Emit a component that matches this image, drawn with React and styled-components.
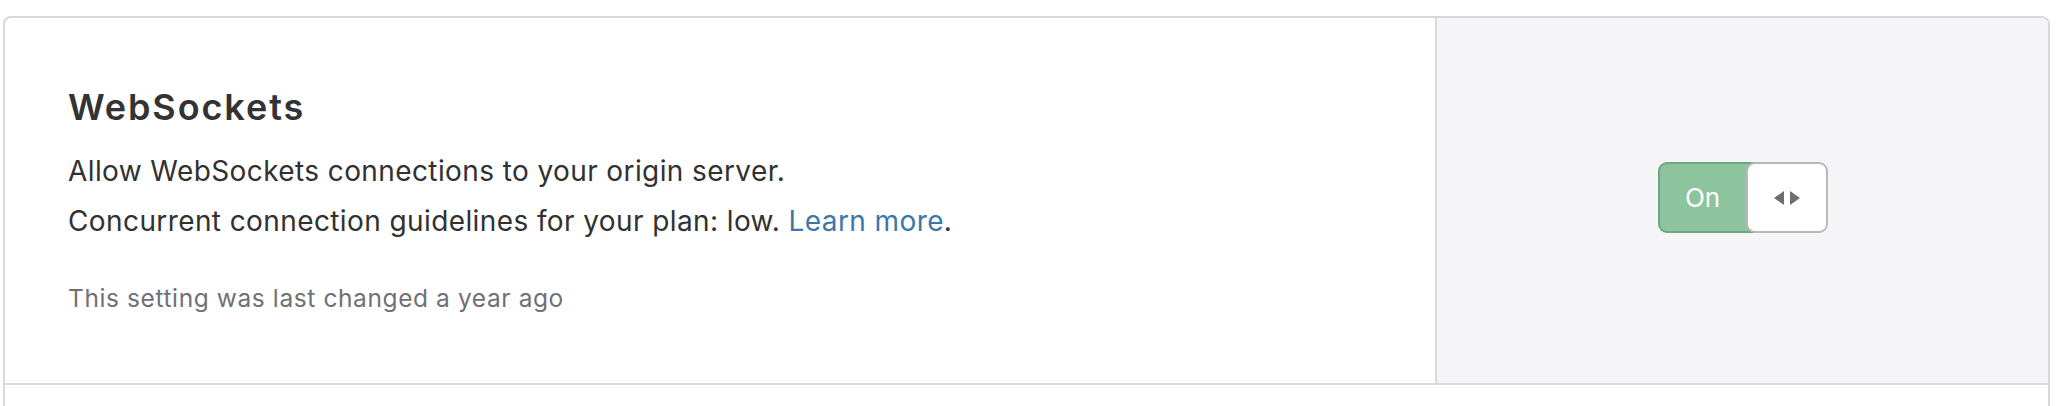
import React, { useState } from 'react';
import styled, { createGlobalStyle } from 'styled-components';

const GlobalStyle = createGlobalStyle`
  html, body {
    margin: 0;
    padding: 0;
    background: #ffffff;
    font-family: Inter, 'Noto Sans', 'Liberation Sans', sans-serif;
    -webkit-font-smoothing: antialiased;
  }
`;

const Page = styled.div`
  padding: 16px 12px 0 3px;
`;

const Card = styled.div`
  border: 2px solid #d9d9d9;
  border-radius: 8px 8px 0 0;
  border-bottom: none;
  overflow: hidden;
`;

const Row = styled.div`
  display: flex;
  min-height: 365px;
  border-bottom: 2px solid #d9d9d9;
`;

const Info = styled.div`
  flex: 1 1 auto;
  padding: 67px 63px 0 63px;
  color: #313131;
`;

const Title = styled.h3`
  margin: 0;
  font-size: 36px;
  font-weight: 600;
  line-height: 44px;
  color: #333333;
  letter-spacing: 1.9px;
`;

const Description = styled.p`
  margin: 17px 0 0;
  font-size: 28px;
  line-height: 50px;
  color: #313131;
  letter-spacing: 0.4px;
`;

const LearnLink = styled.a`
  color: #3c77a9;
  text-decoration: none;
`;

const Changed = styled.div`
  margin-top: 37px;
  font-size: 24.5px;
  color: #717175;
  letter-spacing: 0.6px;
`;

const Control = styled.div`
  flex: 0 0 611px;
  display: flex;
  align-items: center;
  justify-content: center;
  background: #f5f5f7;
  border-left: 2px solid #d9d9d9;
  padding-bottom: 6px;
`;

const Toggle = styled.button`
  display: flex;
  width: 170px;
  height: 71px;
  padding: 0;
  border: none;
  background: transparent;
  cursor: pointer;
  font-family: inherit;
`;

const Track = styled.div`
  flex: 0 0 96px;
  display: flex;
  align-items: center;
  justify-content: center;
  padding-right: 8px;
  box-sizing: border-box;
  background: ${({ on }) => (on ? '#8cc49e' : '#d3d3d6')};
  border: 2px solid ${({ on }) => (on ? '#6fa683' : '#b5b5b9')};
  border-right: none;
  border-radius: 9px 0 0 9px;
  color: #ffffff;
  font-size: 26px;
  margin-right: -8px;
`;

const Knob = styled.div`
  flex: 1 1 auto;
  display: flex;
  align-items: center;
  justify-content: center;
  gap: 6px;
  background: #ffffff;
  border: 2px solid #b8b8bc;
  border-radius: 9px;
  position: relative;
  z-index: 1;
`;

const Arrow = ({ dir }) => (
  <svg width="10" height="14" viewBox="0 0 10 14">
    {dir === 'left' ? (
      <polygon points="10,0 10,14 0,7" fill="#6d6d72" />
    ) : (
      <polygon points="0,0 0,14 10,7" fill="#6d6d72" />
    )}
  </svg>
);

const EmptyRow = styled.div`
  height: 40px;
`;

export default function App() {
  const [on, setOn] = useState(true);
  return (
    <>
      <GlobalStyle />
      <Page>
        <Card>
          <Row>
            <Info>
              <Title>WebSockets</Title>
              <Description>
                Allow WebSockets connections to your origin server.
                <br />
                Concurrent connection guidelines for your plan: low.{' '}
                <LearnLink href="#">Learn more</LearnLink>.
              </Description>
              <Changed>This setting was last changed a year ago</Changed>
            </Info>
            <Control>
              <Toggle onClick={() => setOn(!on)}>
                <Track on={on}>{on ? 'On' : 'Off'}</Track>
                <Knob>
                  <Arrow dir="left" />
                  <Arrow dir="right" />
                </Knob>
              </Toggle>
            </Control>
          </Row>
          <EmptyRow />
        </Card>
      </Page>
    </>
  );
}
